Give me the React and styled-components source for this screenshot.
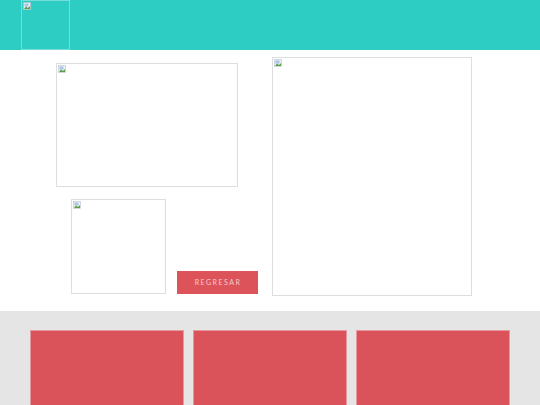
import styled, { createGlobalStyle } from 'styled-components';

const GlobalStyle = createGlobalStyle`
  html, body {
    margin: 0;
    padding: 0;
    background: #ffffff;
    font-family: Lato, 'Open Sans', sans-serif;
    overflow: hidden;
  }
`;

const Header = styled.header`
  display: flex;
  height: 50px;
  padding-left: 21px;
  background-color: #2dcdc4;
`;

const Frame = styled.div`
  box-sizing: border-box;
  width: ${(p) => p.w}px;
  height: ${(p) => p.h}px;
  padding: 1px 0 0 1px;
  border: 1px solid ${(p) => (p.light ? 'rgba(255, 255, 255, 0.35)' : '#dedede')};
  flex-shrink: 0;
`;

const Main = styled.main`
  display: flex;
  align-items: flex-start;
  height: 261px;
  padding-left: 56px;
`;

const LeftCol = styled.div`
  display: flex;
  flex-direction: column;
  width: 202px;
  margin-top: 13px;
`;

const ThumbRow = styled.div`
  display: flex;
  align-items: flex-end;
  gap: 11px;
  margin-top: 12px;
  padding-left: 15px;
`;

const RightCol = styled.div`
  margin-top: 7px;
  margin-left: 14px;
`;

const BackButton = styled.button`
  width: 81px;
  height: 23px;
  border: none;
  padding: 0 0 2px 1px;
  background-color: #dc535a;
  color: #f9c9cb;
  font-family: Lato, 'Open Sans', sans-serif;
  font-size: 7px;
  letter-spacing: 1.5px;
  text-transform: uppercase;
  cursor: pointer;
`;

const Footer = styled.footer`
  box-sizing: border-box;
  display: flex;
  gap: 9px;
  padding: 19px 30px 0;
  height: 94px;
  overflow: hidden;
  background-color: #e5e5e5;
`;

const Card = styled.div`
  box-sizing: border-box;
  flex-shrink: 0;
  width: 154px;
  height: 75px;
  background-color: #db535a;
  border: 1px solid #e49a9d;
  border-bottom: none;
`;

function BrokenIcon() {
  return (
    <svg width="8" height="8" viewBox="0 0 8 8" style={{ display: 'block' }}>
      <rect x="0.5" y="0.5" width="7" height="7" fill="#eef1f5" stroke="#b9c2cc" strokeWidth="0.6" />
      <rect x="1.5" y="1.5" width="4" height="3" fill="#a8c6e6" />
      <path d="M1 7 L3 4.5 L5 6 L7 4 L7 7 Z" fill="#5aa04a" />
    </svg>
  );
}

function Picture({ w, h, light }) {
  return (
    <Frame w={w} h={h} light={light}>
      <BrokenIcon />
    </Frame>
  );
}

export default function App() {
  const cards = [0, 1, 2];
  return (
    <>
      <GlobalStyle />
      <Header>
        <Picture w={49} h={50} light />
      </Header>
      <Main>
        <LeftCol>
          <Picture w={182} h={124} />
          <ThumbRow>
            <Picture w={95} h={95} />
            <BackButton type="button">Regresar</BackButton>
          </ThumbRow>
        </LeftCol>
        <RightCol>
          <Picture w={200} h={239} />
        </RightCol>
      </Main>
      <Footer>
        {cards.map((c) => (
          <Card key={c} />
        ))}
      </Footer>
    </>
  );
}
